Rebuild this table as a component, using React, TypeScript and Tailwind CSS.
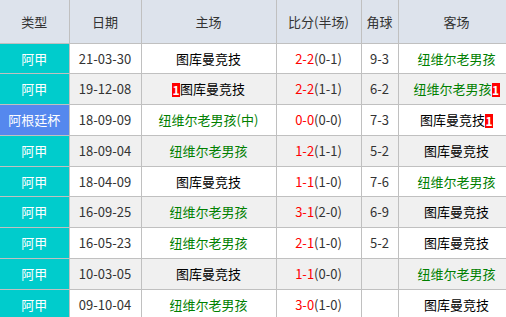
type Row = {
  type: string;
  cup?: boolean;
  date: string;
  home: string;
  homeGreen?: boolean;
  homeBadge?: boolean;
  score: string;
  half: string;
  corner: string;
  away: string;
  awayBadge?: boolean;
};

const rows: Row[] = [
  { type: "阿甲", date: "21-03-30", home: "图库曼竞技", score: "2-2", half: "(0-1)", corner: "9-3", away: "纽维尔老男孩" },
  { type: "阿甲", date: "19-12-08", home: "图库曼竞技", homeBadge: true, score: "2-2", half: "(1-1)", corner: "6-2", away: "纽维尔老男孩", awayBadge: true },
  { type: "阿根廷杯", cup: true, date: "18-09-09", home: "纽维尔老男孩(中)", homeGreen: true, score: "0-0", half: "(0-0)", corner: "7-3", away: "图库曼竞技", awayBadge: true },
  { type: "阿甲", date: "18-09-04", home: "纽维尔老男孩", homeGreen: true, score: "1-2", half: "(1-1)", corner: "5-2", away: "图库曼竞技" },
  { type: "阿甲", date: "18-04-09", home: "图库曼竞技", score: "1-1", half: "(1-0)", corner: "7-6", away: "纽维尔老男孩" },
  { type: "阿甲", date: "16-09-25", home: "纽维尔老男孩", homeGreen: true, score: "3-1", half: "(2-0)", corner: "6-9", away: "图库曼竞技" },
  { type: "阿甲", date: "16-05-23", home: "纽维尔老男孩", homeGreen: true, score: "2-1", half: "(1-0)", corner: "5-2", away: "图库曼竞技" },
  { type: "阿甲", date: "10-03-05", home: "图库曼竞技", score: "1-1", half: "(0-0)", corner: "", away: "纽维尔老男孩" },
  { type: "阿甲", date: "09-10-04", home: "纽维尔老男孩", homeGreen: true, score: "3-0", half: "(1-0)", corner: "", away: "图库曼竞技" },
];

function Badge() {
  return (
    <span className="inline-block bg-[#ff0000] text-white font-bold text-[12px] leading-[14px] w-[8px] text-center align-[-1px]">
      1
    </span>
  );
}

function Team({ name, green, badge, badgeLeft }: { name: string; green: boolean; badge?: boolean; badgeLeft?: boolean }) {
  return (
    <span className={green ? "text-[#008000]" : "text-black"}>
      {badge && badgeLeft && <Badge />}
      {name}
      {badge && !badgeLeft && <Badge />}
    </span>
  );
}

export default function App() {
  const cell = "border-r border-b border-[#c0c0c0] text-center p-0 whitespace-nowrap";
  return (
    <div className="w-[506px] h-[317px] overflow-hidden bg-white">
      <table
        className="table-fixed border-collapse w-[515px] text-[13px] text-[#333]"
        style={{ fontFamily: '"Noto Sans CJK SC", "Liberation Sans", sans-serif' }}
      >
        <colgroup>
          <col className="w-[69px]" />
          <col className="w-[72px]" />
          <col className="w-[135px]" />
          <col className="w-[85px]" />
          <col className="w-[37px]" />
          <col className="w-[117px]" />
        </colgroup>
        <thead>
          <tr className="h-[43px] bg-[#dde3ec]">
            {["类型", "日期", "主场", "比分(半场)", "角球", "客场"].map((h) => (
              <th key={h} className={`${cell} font-normal`}>
                {h}
              </th>
            ))}
          </tr>
        </thead>
        <tbody>
          {rows.map((r, i) => (
            <tr key={i} className={`h-[30.75px] ${i % 2 === 1 ? "bg-[#f0f0f0]" : "bg-white"}`}>
              <td className={`${cell} text-white ${r.cup ? "bg-[#5588ee]" : "bg-[#00cccc]"}`}>{r.type}</td>
              <td className={cell}>{r.date}</td>
              <td className={cell}>
                <Team name={r.home} green={!!r.homeGreen} badge={r.homeBadge} badgeLeft />
              </td>
              <td className={cell}>
                <span className="text-[#ff0000]">{r.score}</span>
                {r.half}
              </td>
              <td className={cell}>{r.corner}</td>
              <td className={cell}>
                <Team name={r.away} green={!r.homeGreen} badge={r.awayBadge} />
              </td>
            </tr>
          ))}
        </tbody>
      </table>
    </div>
  );
}
